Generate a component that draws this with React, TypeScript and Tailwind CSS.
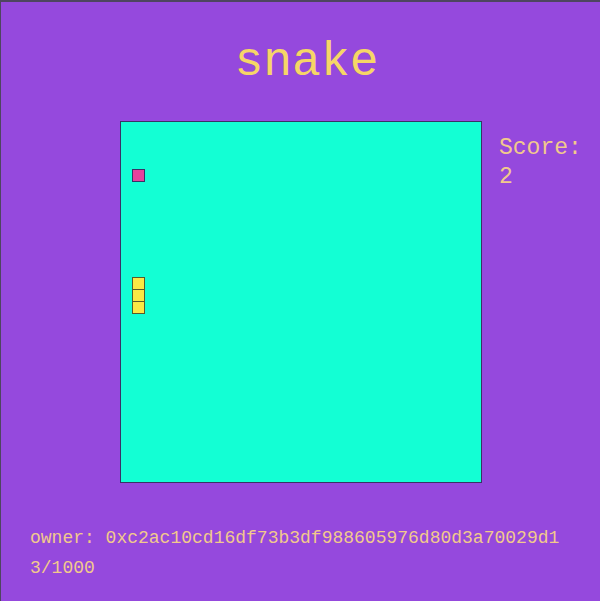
export default function App() {
  const mono = { fontFamily: '"Liberation Mono", "Courier New", monospace' }

  // cells on the board, in px inside the border
  const food = { x: 11, y: 47 }
  const snake = [
    { x: 11, y: 155 },
    { x: 11, y: 167 },
    { x: 11, y: 179 },
  ]

  return (
    <div
      className="min-h-[601px] w-[600px] bg-[#9549dd] border-t-2 border-l border-[#4e4560] flex flex-col"
      style={mono}
    >
      {/* titre */}
      <h1 className="pt-[36px] pl-[12px] text-center text-[48px] leading-[48px] text-[#f6d666]">
        snake
      </h1>

      {/* plateau + score */}
      <div className="flex items-start mt-[35px] pl-[119px]">
        <div className="relative w-[362px] h-[362px] bg-[#13ffd4] border border-[#3a3266]">
          <div
            className="absolute w-[13px] h-[13px] bg-[#e6429c] border border-[#3a3266]"
            style={{ left: food.x, top: food.y }}
          />
          {snake.map((s, i) => (
            <div
              key={i}
              className="absolute w-[13px] h-[13px] bg-[#fbe845] border border-[#5a5a2a]"
              style={{ left: s.x, top: s.y }}
            />
          ))}
        </div>
        <div className="ml-[17px] mt-[13px] text-[23px] leading-[29px] text-[#f2c98c]">
          <p>Score:</p>
          <p>2</p>
        </div>
      </div>

      {/* pied */}
      <div className="mt-[40px] pl-[29px] text-[18px] leading-[30px] text-[#f2c98c]">
        <p>owner: 0xc2ac10cd16df73b3df988605976d80d3a70029d1</p>
        <p>3/1000</p>
      </div>
    </div>
  )
}
